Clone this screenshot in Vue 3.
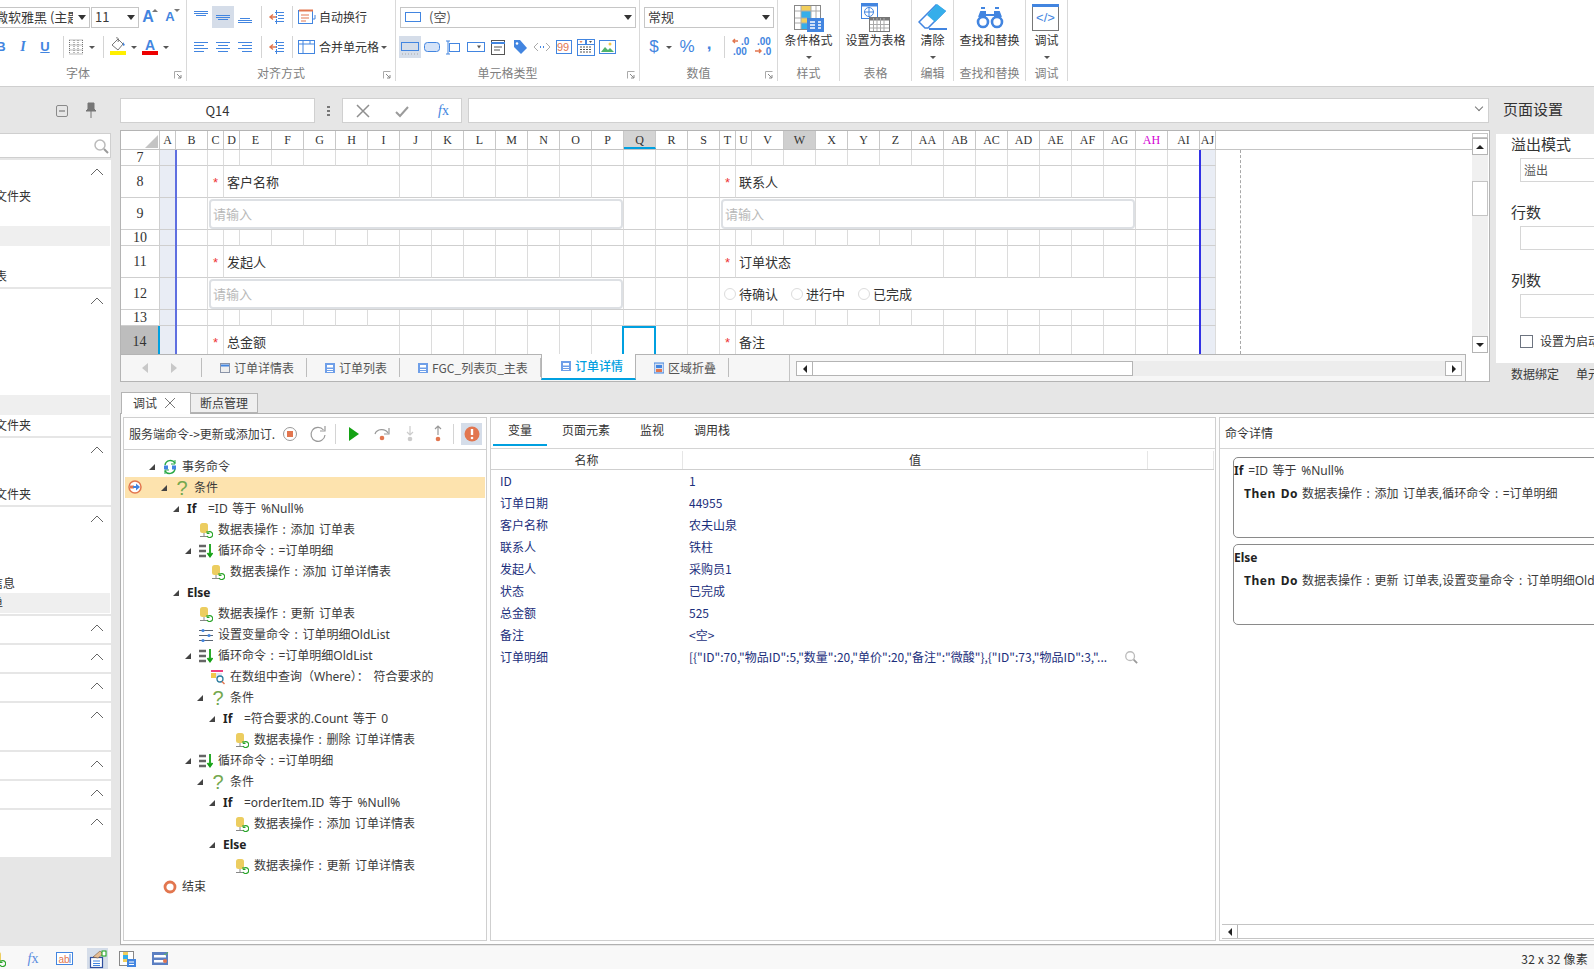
<template>
  <div class="app">
    <!-- 功能区 -->
    <div class="ribbon">
      <div class="group g-font">
        <div class="rb-row">
          <div class="combo c-family"><span class="combo-text">微软雅黑 (主题</span><i class="caret"></i></div>
          <div class="combo c-size"><span class="combo-text">11</span><i class="caret"></i></div>
          <span class="grow big">A<i class="tri-up"></i></span>
          <span class="grow small">A<i class="tri-down"></i></span>
        </div>
        <div class="rb-row">
          <span class="fmt"><b>B</b></span>
          <span class="fmt"><b><em>I</em></b></span>
          <span class="fmt under"><b>U</b></span>
          <i class="sep" style="margin-left:7px"></i>
          <svg class="i20" style="margin-left:2px" viewBox="0 0 20 20" v-html="ic.borders"></svg>
          <span class="drop w12"><i class="mini"></i></span>
          <i class="sep" style="margin-left:5px"></i>
          <svg class="i22" style="margin-left:3px" viewBox="0 0 22 22" v-html="ic.fill"></svg>
          <span class="drop"><i class="mini"></i></span>
          <svg class="i22" viewBox="0 0 22 22" v-html="ic.fontColor"></svg>
          <span class="drop"><i class="mini"></i></span>
        </div>
        <div class="g-label with-launch" style="margin-left:-10px">字体</div>
        <svg class="launcher" viewBox="0 0 8 8" v-html="ic.launcher"></svg>
      </div>

      <div class="group g-align">
        <div class="rb-row">
          <svg class="i22" viewBox="0 0 22 22" v-html="ic.alignTop"></svg>
          <svg class="i22 on" viewBox="0 0 22 22" v-html="ic.alignMid"></svg>
          <svg class="i22" viewBox="0 0 22 22" v-html="ic.alignBot"></svg>
          <i class="sep" style="margin-left:5px"></i>
          <svg class="i22" style="margin-left:4px" viewBox="0 0 22 22" v-html="ic.indent"></svg>
          <i class="sep" style="margin-left:4px"></i>
          <svg class="i20" style="margin-left:4px" viewBox="0 0 20 20" v-html="ic.wrap"></svg>
          <span class="rb-text">自动换行</span>
        </div>
        <div class="rb-row">
          <svg class="i22" viewBox="0 0 22 22" v-html="ic.left"></svg>
          <svg class="i22" viewBox="0 0 22 22" v-html="ic.center"></svg>
          <svg class="i22" viewBox="0 0 22 22" v-html="ic.right"></svg>
          <i class="sep" style="margin-left:5px"></i>
          <svg class="i22" style="margin-left:4px" viewBox="0 0 22 22" v-html="ic.indent"></svg>
          <i class="sep" style="margin-left:4px"></i>
          <svg class="i20" style="margin-left:4px" viewBox="0 0 20 20" v-html="ic.merge"></svg>
          <span class="rb-text">合并单元格</span>
          <span class="drop"><i class="mini"></i></span>
        </div>
        <div class="g-label with-launch">对齐方式</div>
        <svg class="launcher" viewBox="0 0 8 8" v-html="ic.launcher"></svg>
      </div>

      <div class="group g-type">
        <div class="rb-row">
          <div class="combo c-type">
            <svg class="i18" viewBox="0 0 18 18" v-html="ic.typeSmall"></svg>
            <span class="combo-text">(空)</span><i class="caret"></i>
          </div>
        </div>
        <div class="rb-row">
          <svg v-for="(t, i) in cellTypes" :key="t" class="i22" :class="{ on: i === 0 }" viewBox="0 0 22 22" v-html="ic[t]"></svg>
        </div>
        <div class="g-label with-launch">单元格类型</div>
        <svg class="launcher" viewBox="0 0 8 8" v-html="ic.launcher"></svg>
      </div>

      <div class="group g-num">
        <div class="rb-row">
          <div class="combo c-num"><span class="combo-text">常规</span><i class="caret"></i></div>
        </div>
        <div class="rb-row">
          <span class="num-sign w20">$</span>
          <span class="drop"><i class="mini"></i></span>
          <span class="num-sign w20" style="margin-left:3px">%</span>
          <span class="num-sign w20 comma" style="margin-left:2px">,</span>
          <i class="sep" style="margin-left:5px"></i>
          <svg class="i22" style="margin-left:5px" viewBox="0 0 22 22" v-html="ic.decUp"></svg>
          <svg class="i22" viewBox="0 0 22 22" v-html="ic.decDown"></svg>
        </div>
        <div class="g-label with-launch">数值</div>
        <svg class="launcher" viewBox="0 0 8 8" v-html="ic.launcher"></svg>
      </div>

      <div v-for="b in bigButtons" :key="b.group + b.text" class="group big-group" :style="{ width: b.w + 'px' }">
        <svg class="big-icon" viewBox="0 0 30 30" v-html="ic[b.icon]"></svg>
        <div class="big-text">{{ b.text }}</div>
        <div class="big-caret"><i v-if="b.caret" class="mini"></i></div>
        <div class="g-label">{{ b.group }}</div>
      </div>
    </div>

    <!-- 公式栏 -->
    <div class="formula-bar">
      <svg class="fb-minus" viewBox="0 0 12 12"><rect x=".5" y=".5" width="11" height="11" rx="1.5" fill="none" stroke="#8a8a8a" /><path d="M3 6h6" stroke="#666" /></svg>
      <svg class="fb-pin" viewBox="0 0 12 16"><path d="M3 1h6v6l2 2H1l2-2zM6 9v7" fill="#777" stroke="#777" /></svg>
      <div class="name-box">Q14</div>
      <span class="fb-dots"></span>
      <div class="fx-box">
        <svg class="i16" viewBox="0 0 16 16"><path d="M2 2l12 12M14 2L2 14" stroke="#8f8f8f" stroke-width="1.5" /></svg>
        <svg class="i16" viewBox="0 0 16 16"><path d="M2 9l4 4 8-9" fill="none" stroke="#9b9b9b" stroke-width="2" /></svg>
        <span class="fx-text"><i>f</i>x</span>
      </div>
      <div class="formula-input"><span class="fb-chev"></span></div>
      <div class="page-title">页面设置</div>
    </div>

    <div class="main">
      <!-- 左侧分组列表 -->
      <aside class="side">
        <div class="side-search">
          <svg class="i16" viewBox="0 0 16 16"><circle cx="7" cy="7" r="5" fill="none" stroke="#bbb" stroke-width="1.5" /><path d="M11 11l4 4" stroke="#999" stroke-width="2" /></svg>
        </div>
        <section v-for="(s, i) in sideSections" :key="i" class="side-sec">
          <svg class="chev" viewBox="0 0 14 8"><path d="M1 7l6-6 6 6" fill="none" stroke="#666" /></svg>
          <div v-for="(r, j) in s" :key="j" class="side-row" :class="{ gray: r.gray }">
            <span v-if="r.t" :style="{ marginLeft: r.x + 'px' }">{{ r.t }}</span>
          </div>
        </section>
      </aside>

      <div class="work">
        <div class="top-row">
          <!-- 表格设计区 -->
          <div class="sheet">
            <div class="sheet-main">
              <div class="col-head grid-cols">
                <div class="corner"><i></i></div>
                <div v-for="c in colNames" :key="c" class="col-cell" :class="{ 'col-active': c === 'Q', 'col-hover': c === 'W', 'col-pink': c === 'AH' }">{{ c }}</div>
              </div>
              <div class="sheet-body">
                <div v-for="row in rows" :key="row.no" class="sheet-row grid-cols" :style="{ height: row.h + 'px' }">
                  <div class="row-head" :class="{ 'row-active': row.no === 14 }">{{ row.no }}</div>
                  <div v-for="c in row.cells" :key="c.i" class="cell" :class="{ shade: c.i === 0 || c.i === 35 }" :style="{ gridColumn: 'span ' + c.span }">
                    <span v-if="c.kind === 'star'" class="star">*</span>
                    <span v-else-if="c.kind === 'label'" class="cell-label">{{ c.text }}</span>
                    <div v-else-if="c.kind === 'input'" class="cell-input">请输入</div>
                    <div v-else-if="c.kind === 'radio'" class="radios">
                      <label v-for="o in c.options" :key="o"><i></i>{{ o }}</label>
                    </div>
                  </div>
                </div>
                <i class="freeze freeze-l"></i>
                <i class="freeze freeze-r"></i>
                <i class="page-break"></i>
                <i class="selection"></i>
              </div>
              <div class="sheet-tabs">
                <div class="tab-nav">
                  <i class="nav-l"></i><i class="nav-r"></i>
                </div>
                <div v-for="t in sheetTabs" :key="t.name" class="sheet-tab" :class="{ active: t.active }">
                  <svg class="tab-icon" viewBox="0 0 10 12" v-html="ic[t.icon]"></svg>{{ t.name }}
                </div>
                <i class="hs-div"></i>
                <div class="hscroll">
                  <span class="sb-btn"><i class="tri-l"></i></span>
                  <span class="sb-thumb"></span>
                  <span class="sb-track"></span>
                  <span class="sb-btn"><i class="tri-r"></i></span>
                </div>
              </div>
            </div>
            <div class="vscroll">
              <span class="vs-split"></span>
              <span class="vs-btn"><i class="tri-u"></i></span>
              <div class="vs-track"><span class="vs-thumb"></span></div>
              <span class="vs-btn"><i class="tri-d"></i></span>
            </div>
          </div>

          <!-- 属性面板 -->
          <div class="props">
            <div class="props-card">
              <div class="prop-title">溢出模式</div>
              <div class="prop-input">溢出</div>
              <div class="prop-title next">行数</div>
              <div class="prop-input"></div>
              <div class="prop-title next">列数</div>
              <div class="prop-input"></div>
              <label class="prop-check"><i></i>设置为启动项</label>
            </div>
            <div class="prop-tabs"><span>数据绑定</span><span>单元格设置</span></div>
          </div>
        </div>

        <!-- 调试面板 -->
        <div class="debug">
          <div class="debug-tabs">
            <div class="dtab on">调试<svg class="i12" viewBox="0 0 12 12"><path d="M1 1l10 10M11 1L1 11" stroke="#777" /></svg></div>
            <div class="dtab">断点管理</div>
          </div>
          <div class="debug-wrap">
            <div class="panel p-tree">
              <div class="tree-bar">
                <span class="tree-title">服务端命令-&gt;更新或添加订.</span>
                <svg class="i20 t1" viewBox="0 0 20 20" v-html="ic.stop"></svg>
                <svg class="i20 t2" viewBox="0 0 20 20" v-html="ic.refresh"></svg>
                <i class="sep t3"></i>
                <svg class="i20 t4" viewBox="0 0 20 20" v-html="ic.play"></svg>
                <svg class="i20 t5" viewBox="0 0 20 20" v-html="ic.stepOver"></svg>
                <svg class="i20 t5" viewBox="0 0 20 20" v-html="ic.stepIn"></svg>
                <svg class="i20 t5" viewBox="0 0 20 20" v-html="ic.stepOut"></svg>
                <i class="sep t6"></i>
                <span class="err-btn"><svg class="i20" viewBox="0 0 20 20" v-html="ic.error"></svg></span>
              </div>
              <div class="tree">
                <div v-for="(n, i) in tree" :key="i" class="tree-row" :class="{ current: n.cur }" :style="{ paddingLeft: 21 + n.d * 12 + 'px' }">
                  <svg v-if="n.cur" class="bp-icon" viewBox="0 0 14 14" v-html="ic.breakpoint"></svg>
                  <span class="arrow"><i v-if="n.open"></i></span>
                  <svg v-if="n.icon" class="tree-icon" viewBox="0 0 14 16" v-html="ic[n.icon]"></svg>
                  <b v-if="n.key" class="tree-key">{{ n.key }}</b>
                  <span class="tree-text">{{ n.text }}</span>
                </div>
              </div>
            </div>

            <div class="panel p-vars">
              <div class="var-tabs">
                <span v-for="(t, i) in varTabs" :key="t" class="var-tab" :class="{ on: i === 0 }">{{ t }}</span>
              </div>
              <div class="var-table">
                <div class="var-head var-grid">
                  <div>名称</div><div>值</div><div></div>
                </div>
                <div v-for="v in variables" :key="v.name" class="var-row var-grid">
                  <div class="var-name">{{ v.name }}</div>
                  <div class="var-val">
                    <span>{{ v.value }}</span>
                    <svg v-if="v.more" class="i14" viewBox="0 0 16 16"><circle cx="7" cy="7" r="5" fill="none" stroke="#bbb" stroke-width="1.5" /><path d="M11 11l4 4" stroke="#999" stroke-width="2" /></svg>
                  </div>
                </div>
              </div>
            </div>

            <div class="panel p-detail">
              <div class="detail-head">命令详情</div>
              <div class="detail-body">
                <div class="detail-card">
                  <div><b>If</b><span class="cond">=ID 等于 %Null%</span></div>
                  <div class="then"><b>Then Do</b>数据表操作 : 添加 订单表,循环命令 : =订单明细</div>
                </div>
                <div class="detail-card">
                  <div><b>Else</b></div>
                  <div class="then"><b>Then Do</b>数据表操作 : 更新 订单表,设置变量命令 : 订单明细OldList</div>
                </div>
              </div>
              <div class="detail-scroll"><span class="sb-btn"><i class="tri-l"></i></span></div>
            </div>
          </div>
        </div>
      </div>
    </div>

    <!-- 状态栏 -->
    <div class="status">
      <svg class="st-icon st-db" viewBox="0 0 14 16" v-html="ic.db"></svg>
      <span class="st-fx"><i>f</i>x</span>
      <svg class="i20 st-ab" viewBox="0 0 20 20" v-html="ic.abField"></svg>
      <span class="st-active"><svg class="i20" viewBox="0 0 20 20" v-html="ic.hand"></svg></span>
      <svg class="i20 st-cf" viewBox="0 0 20 20" v-html="ic.cfSmall"></svg>
      <svg class="i20 st-form" viewBox="0 0 20 20" v-html="ic.formSmall"></svg>
      <span class="st-size">32 x 32 像素</span>
    </div>
  </div>
</template>

<script setup>
const blue = '#4285e0'
const orange = '#e2764f'

const ic = {
  launcher: `<path d="M.5 7.5v-7h7" fill="none" stroke="#aaa"/><path d="M3 3l4 4M4 7h3V4" fill="none" stroke="#888"/>`,
  borders: `<path d="M3.5 3h13M3.5 8h13M3.5 13h13M3.5 17h13M3.5 3v14M8 3v14M12 3v14M16.5 3v14" stroke="#777" stroke-dasharray="1 1"/>`,
  fill: `<path d="M5 9l6-6 5 5-5 6z" fill="#fff" stroke="#777"/><path d="M9 2c2-1 3 1 2 4" fill="none" stroke="#777"/><path d="M16 6l2 3-2 1z" fill="${blue}"/><rect x="3" y="15" width="16" height="4" fill="#ffef00"/>`,
  fontColor: `<text x="11" y="14" text-anchor="middle" font-size="14" font-weight="700" font-family="Liberation Sans" fill="${blue}">A</text><rect x="3" y="15" width="16" height="4" fill="#ee0000"/>`,
  alignTop: `<path d="M4 5.5h14M4 7.5h14M6 9.5h10" stroke="${blue}"/>`,
  alignMid: `<path d="M4 9.5h14M4 11.5h14M6 13.5h10" stroke="${blue}"/>`,
  alignBot: `<path d="M6 12.5h10M4 14.5h14M4 16.5h14" stroke="${blue}"/>`,
  left: `<path d="M4 6.5h14M4 9.5h10M4 12.5h14M4 15.5h10" stroke="${blue}"/>`,
  center: `<path d="M4 6.5h14M6 9.5h10M4 12.5h14M6 15.5h10" stroke="${blue}"/>`,
  right: `<path d="M4 6.5h14M8 9.5h10M4 12.5h14M8 15.5h10" stroke="${blue}"/>`,
  indent: `<path d="M9 6.5h9M12 9.5h6M12 12.5h6M9 15.5h9" stroke="${blue}"/><path d="M10.500 4v14" stroke="${blue}" stroke-dasharray="2 1"/><path d="M10 11H4M7 8.500L4 11l3 2.500" fill="none" stroke="${orange}" stroke-width="1.400"/>`,
  wrap: `<rect x="1.500" y="3.500" width="14" height="13" fill="none" stroke="${blue}"/><path d="M2 3.500h14" stroke="${orange}" stroke-width="2"/><path d="M4 8h8M4 11h8M4 14h5" stroke="${orange}"/><path d="M18 8v4h-3" fill="none" stroke="${blue}"/>`,
  merge: `<rect x="1.500" y="3.500" width="16" height="13" fill="none" stroke="${blue}"/><path d="M2 7h15M6 4v12M13 4v3" stroke="${blue}"/>`,
  typeSmall: `<rect x="1.500" y="4.500" width="15" height="9" fill="none" stroke="${blue}"/>`,
  tBox: `<rect x="2.500" y="6.500" width="17" height="8" fill="none" stroke="${blue}"/><path d="M3 18h16" stroke="#aaa" stroke-dasharray="1 2"/>`,
  tRound: `<rect x="3.500" y="6.500" width="15" height="9" rx="3" fill="#d5e3f8" stroke="${blue}"/>`,
  tIbeam: `<rect x="6.500" y="7.500" width="10" height="8" fill="none" stroke="${blue}"/><path d="M3 5h4M3 18h4M5 5v13" stroke="${blue}"/>`,
  tCombo: `<rect x="2.500" y="6.500" width="17" height="9" fill="none" stroke="${blue}"/><path d="M12 9.500h4l-2 3z" fill="#555"/>`,
  tList: `<rect x="4.500" y="4.500" width="13" height="14" fill="none" stroke="#555"/><path d="M4 7h14" stroke="${blue}" stroke-width="2"/><path d="M7 11h8M7 14h6" stroke="#555"/>`,
  tTag: `<path d="M5 4h6l7 8-6 6-7-7z" fill="${blue}"/><circle cx="8" cy="7.500" r="1.300" fill="#fff"/>`,
  tCode: `<path d="M7 7l-4 4 4 4M15 7l4 4-4 4" fill="none" stroke="#aaa"/><path d="M9 11h1M12 11h1" stroke="${blue}" stroke-width="2"/>`,
  t99: `<rect x="3.500" y="4.500" width="15" height="13" fill="#fff" stroke="${blue}"/><text x="10" y="15" text-anchor="middle" font-size="11" font-family="Liberation Sans" fill="${orange}">99</text>`,
  tCal: `<rect x="2.500" y="3.500" width="8" height="5" fill="#fff" stroke="${blue}"/><rect x="11.500" y="3.500" width="8" height="5" fill="#fff" stroke="${blue}"/><rect x="2.500" y="8.500" width="17" height="11" fill="#fff" stroke="${blue}"/><path d="M5 11h12M5 13.500h12M5 16h12" stroke="#555" stroke-dasharray="2 1"/><path d="M5 5l1 1.500 1-1.500" fill="none" stroke="${orange}"/><path d="M14 5h3l-1.500 2z" fill="#555"/>`,
  tImg: `<rect x="2.500" y="4.500" width="16" height="13" fill="#fff" stroke="${blue}"/><path d="M4 16l4-5 3 3 2-2 4 4z" fill="#4fb36b"/><circle cx="13" cy="8" r="1.500" fill="#f2c84b"/>`,
  decUp: `<path d="M8 5H3M5 3L3 5l2 2" fill="none" stroke="${orange}" stroke-width="1.400"/><text x="11" y="9" font-size="10" font-weight="700" font-family="Liberation Sans" fill="${blue}">.0</text><text x="3" y="19" font-size="10" font-weight="700" font-family="Liberation Sans" fill="${blue}">.00</text>`,
  decDown: `<text x="5" y="9" font-size="10" font-weight="700" font-family="Liberation Sans" fill="${blue}">.00</text><path d="M3 15h6M7 13l2 2-2 2" fill="none" stroke="${orange}" stroke-width="1.400"/><text x="11" y="19" font-size="10" font-weight="700" font-family="Liberation Sans" fill="${blue}">.0</text>`,
  bigCf: `<rect x=".5" y="3.500" width="26" height="24" fill="#fff" stroke="#888"/><rect x="7" y="4" width="10" height="5" fill="#f2cf5c"/><rect x="7" y="9" width="10" height="7" fill="#35aeea"/><rect x="7" y="16" width="10" height="5" fill="#f2cf5c"/><rect x="7" y="21" width="6" height="6" fill="#35aeea"/><path d="M7 4v23M17 4v12M22 4v12M1 9h25M1 16h12M1 21h12" stroke="#aaa"/><rect x="13" y="16" width="17" height="14" fill="${blue}"/><path d="M16 20h5M24 20h3M16 23h5M24 26h3M24 23h3M16 26h5" stroke="#fff" stroke-width="1.300"/>`,
  bigTable: `<rect x=".5" y="1.500" width="16" height="15" fill="#fff" stroke="${blue}"/><path d="M0 3h17" stroke="${blue}" stroke-width="3"/><circle cx="8" cy="10" r="4.500" fill="#fff" stroke="${blue}"/><path d="M3.500 10h9M8 5.500v9" stroke="${blue}"/><rect x="8.500" y="15.500" width="20" height="14" fill="#fff" stroke="#777"/><path d="M9 17h19" stroke="#777" stroke-width="3"/><path d="M9 22.500h19M9 26h19M12.500 16v13M16 16v13M19.500 16v13M23 16v13" stroke="#aaa"/>`,
  bigEraser: `<path d="M1 20L18 3l9 6-17 17H7z" fill="#fff" stroke="${blue}" stroke-width="1.500"/><path d="M9 13L19 2l9 7-11 11z" fill="#35aeea"/><path d="M11 27h18" stroke="${blue}" stroke-width="2"/>`,
  bigFind: `<circle cx="8" cy="20" r="5" fill="#fff" stroke="${blue}" stroke-width="2.600"/><circle cx="22" cy="20" r="5" fill="#fff" stroke="${blue}" stroke-width="2.600"/><path d="M4 15l2-5h4v5M26 15l-2-5h-4v5M10 13h10" fill="${blue}" stroke="${blue}" stroke-width="2"/><path d="M6 6h4M20 6h4" stroke="${blue}" stroke-width="2"/>`,
  bigDebug: `<rect x=".5" y="2.500" width="26" height="26" fill="#fff" stroke="#777"/><rect x="0" y="2" width="27" height="3" fill="${blue}"/><text x="13.500" y="20" text-anchor="middle" font-size="13" font-family="Liberation Sans" fill="${blue}">&lt;/&gt;</text>`,
  sheetPlain: `<rect x=".5" y="1.500" width="9" height="9" fill="#eee" stroke="#8a94a8"/><path d="M1 3.500h8" stroke="${blue}" stroke-width="2"/>`,
  sheetForm: `<rect x="0" y="1" width="10" height="10" fill="#6f9fe8"/><rect x="2" y="3" width="6" height="2.500" fill="#fff"/><path d="M2 7.500h6M2 9.500h6" stroke="#fff"/>`,
  sheetFold: `<rect x="0" y="1" width="10" height="10" fill="#d5dff0" stroke="${blue}"/><rect x="2" y="3" width="6" height="3" fill="${blue}"/><rect x="2" y="7" width="6" height="3" fill="${orange}"/>`,
  stop: `<circle cx="10" cy="10" r="6.500" fill="none" stroke="#999"/><rect x="7" y="7" width="6" height="6" fill="${orange}"/>`,
  refresh: `<path d="M15.500 6A7 7 0 1 0 17 11" fill="none" stroke="#999" stroke-width="1.200"/><path d="M17 2v5h-5" fill="none" stroke="#999" stroke-width="1.200"/>`,
  play: `<path d="M5 3l10 7-10 7z" fill="#14a214"/>`,
  stepOver: `<path d="M3 10a7 6 0 0 1 13-1" fill="none" stroke="#999" stroke-width="1.200"/><path d="M17 4v6h-5" fill="none" stroke="#999" stroke-width="1.200"/><circle cx="10" cy="14" r="2.300" fill="${orange}"/>`,
  stepIn: `<path d="M10 2v9M7 8l3 3 3-3" fill="none" stroke="#ccc" stroke-width="1.200"/><circle cx="10" cy="15" r="2.300" fill="#ccc"/>`,
  stepOut: `<path d="M10 11V2M7 5l3-3 3 3" fill="none" stroke="#999" stroke-width="1.200"/><circle cx="10" cy="15" r="2.300" fill="${orange}"/>`,
  error: `<circle cx="10" cy="10" r="7.500" fill="${orange}"/><path d="M10 5v6" stroke="#fff" stroke-width="2.400"/><circle cx="10" cy="14" r="1.300" fill="#fff"/>`,
  breakpoint: `<circle cx="7" cy="7" r="6" fill="#fff" stroke="${orange}" stroke-width="1.500"/><path d="M2 7h4" stroke="${orange}" stroke-width="3"/><path d="M5 7h4" stroke="${blue}" stroke-width="2"/><path d="M8 3.500L12 7l-4 3.500z" fill="${blue}"/>`,
  tx: `<path d="M2 6a5.500 5.500 0 0 1 10-2M12 10a5.500 5.500 0 0 1-10 2" fill="none" stroke="#27a844" stroke-width="1.400"/><path d="M12 1v4H8M2 15v-4h4" fill="none" stroke="#27a844"/><rect x="1" y="6.500" width="4" height="4" fill="${blue}"/><rect x="9" y="6.500" width="4" height="4" fill="${blue}"/>`,
  cond: `<text x="7" y="15" text-anchor="middle" font-size="20" font-family="Liberation Sans" fill="#74a84f">?</text>`,
  db: `<rect x="1" y="1" width="8" height="10" rx="2.500" fill="#eccd60"/><path d="M5 11v3M1 14.500h8" stroke="#888"/><path d="M8 14a3 3 0 1 0 .5-3.500" fill="none" stroke="#2aa52a" stroke-width="1.200"/><path d="M8 9v2.500h2.500" fill="none" stroke="#2aa52a"/>`,
  loop: `<path d="M0 3h7M0 8h7M0 13h7" stroke="#666" stroke-width="2.600"/><path d="M11 1v12M8.500 10l2.500 3.500 2.500-3.500" fill="none" stroke="#14a214" stroke-width="1.800"/>`,
  vars: `<path d="M0 3.500h14M0 8.500h14M0 13.500h14" stroke="#5a6472"/><circle cx="4" cy="3.500" r="1.600" fill="${blue}"/><circle cx="10" cy="8.500" r="1.600" fill="${blue}"/><circle cx="4" cy="13.500" r="1.600" fill="${blue}"/>`,
  query: `<rect x="0" y="1" width="12" height="2" fill="#ef3f7e"/><rect x="0" y="4" width="5" height="5" fill="#f2c84b"/><rect x="5" y="4" width="6" height="6" fill="#dfe8f5"/><circle cx="9" cy="10" r="3" fill="#fff" stroke="#2b7c9e" stroke-width="1.300"/><path d="M11 12.500l2.500 2.500" stroke="${orange}" stroke-width="1.400"/>`,
  end: `<circle cx="7" cy="8" r="5" fill="none" stroke="${orange}" stroke-width="2.800"/>`,
  abField: `<rect x="1.500" y="3.500" width="16" height="12" fill="#fff" stroke="${blue}"/><text x="3.500" y="13.500" font-size="10" font-family="Liberation Sans" fill="${orange}">ab</text><path d="M15 5v9" stroke="${blue}"/>`,
  hand: `<rect x="2.500" y="8.500" width="12" height="10" fill="#fff" stroke="#2f4f9f" stroke-width="1.200"/><path d="M5 12h7M5 14.500h7M5 16.500h7" stroke="${blue}"/><path d="M5 8l7-6 3 3-5 4z" fill="#e6bd93" stroke="#7a5a3a" stroke-width=".6"/><rect x="14" y="2" width="4" height="5" fill="#fff" stroke="#14a214"/>`,
  cfSmall: `<rect x="1.500" y="2.500" width="14" height="14" fill="#fff" stroke="#888"/><rect x="5" y="3" width="5" height="3" fill="#f2cf5c"/><rect x="5" y="6" width="5" height="4" fill="#35aeea"/><rect x="5" y="10" width="5" height="3" fill="#f2cf5c"/><rect x="9" y="10" width="9" height="8" fill="${blue}"/><path d="M11 13h5M11 15.500h5" stroke="#fff"/>`,
  formSmall: `<rect x="1" y="3" width="16" height="13" fill="#5b7fc2"/><rect x="3" y="6" width="12" height="2.500" fill="#fff"/><rect x="3" y="11" width="12" height="2.500" fill="#fff"/><circle cx="14" cy="12" r="2" fill="${orange}"/><path d="M13 5l1.500 1L17 3" fill="none" stroke="#5cb85c"/>`,
}

const cellTypes = ['tBox', 'tRound', 'tIbeam', 'tCombo', 'tList', 'tTag', 'tCode', 't99', 'tCal', 'tImg']

const bigButtons = [
  { group: '样式', text: '条件格式', w: 62, icon: 'bigCf', caret: true },
  { group: '表格', text: '设置为表格', w: 72, icon: 'bigTable' },
  { group: '编辑', text: '清除', w: 42, icon: 'bigEraser', caret: true },
  { group: '查找和替换', text: '查找和替换', w: 72, icon: 'bigFind' },
  { group: '调试', text: '调试', w: 42, icon: 'bigDebug', caret: true },
]

// 左侧分组：每项一行 20px，x 是被面板左边裁掉的偏移
const blank = () => ({})
const side = (n, items = {}) => Array.from({ length: n }, (_, i) => items[i] || blank())
const sideSections = [
  side(6, { 1: { t: '文件夹', x: -5 }, 3: { gray: true }, 5: { t: '表', x: -5 } }),
  side(7, { 5: { gray: true }, 6: { t: '文件夹', x: -5 } }),
  side(3, { 2: { t: '文件夹', x: -5 } }),
  side(5, { 3: { t: '信息', x: -9 }, 4: { gray: true, t: '单', x: -9 } }),
  side(1),
  side(1),
  side(1),
  side(2),
  side(1),
  side(1),
  side(2),
]

const colNames = ['A', 'B', 'C', 'D', 'E', 'F', 'G', 'H', 'I', 'J', 'K', 'L', 'M', 'N', 'O', 'P', 'Q', 'R', 'S', 'T', 'U', 'V', 'W', 'X', 'Y', 'Z', 'AA', 'AB', 'AC', 'AD', 'AE', 'AF', 'AG', 'AH', 'AI', 'AJ']

function buildRow(no, h, merges = {}) {
  const cells = []
  for (let i = 0; i < colNames.length; i++) {
    const m = merges[i]
    cells.push({ i, span: 1, ...m })
    if (m && m.span) i += m.span - 1
  }
  return { no, h, cells }
}

const labelRow = (no, a, b) =>
  buildRow(no, 32, {
    2: { kind: 'star' },
    3: { kind: 'label', text: a, span: 6 },
    19: { kind: 'star' },
    20: { kind: 'label', text: b, span: 7 },
  })

const rows = [
  buildRow(7, 16),
  labelRow(8, '客户名称', '联系人'),
  buildRow(9, 32, { 2: { kind: 'input', span: 14 }, 19: { kind: 'input', span: 14 } }),
  buildRow(10, 16),
  labelRow(11, '发起人', '订单状态'),
  buildRow(12, 32, {
    2: { kind: 'input', span: 14 },
    19: { kind: 'radio', span: 14, options: ['待确认', '进行中', '已完成'] },
  }),
  buildRow(13, 16),
  labelRow(14, '总金额', '备注'),
]

const sheetTabs = [
  { name: '订单详情表', icon: 'sheetPlain' },
  { name: '订单列表', icon: 'sheetForm' },
  { name: 'FGC_列表页_主表', icon: 'sheetForm' },
  { name: '订单详情', icon: 'sheetForm', active: true },
  { name: '区域折叠', icon: 'sheetFold' },
]

const tree = [
  { d: 0, open: true, icon: 'tx', text: '事务命令' },
  { d: 1, open: true, icon: 'cond', text: '条件', cur: true },
  { d: 2, open: true, key: 'If', text: '=ID 等于 %Null%' },
  { d: 3, icon: 'db', text: '数据表操作 : 添加 订单表' },
  { d: 3, open: true, icon: 'loop', text: '循环命令 : =订单明细' },
  { d: 4, icon: 'db', text: '数据表操作 : 添加 订单详情表' },
  { d: 2, open: true, key: 'Else' },
  { d: 3, icon: 'db', text: '数据表操作 : 更新 订单表' },
  { d: 3, icon: 'vars', text: '设置变量命令 : 订单明细OldList' },
  { d: 3, open: true, icon: 'loop', text: '循环命令 : =订单明细OldList' },
  { d: 4, icon: 'query', text: '在数组中查询（Where）： 符合要求的' },
  { d: 4, open: true, icon: 'cond', text: '条件' },
  { d: 5, open: true, key: 'If', text: '=符合要求的.Count 等于 0' },
  { d: 6, icon: 'db', text: '数据表操作 : 删除 订单详情表' },
  { d: 3, open: true, icon: 'loop', text: '循环命令 : =订单明细' },
  { d: 4, open: true, icon: 'cond', text: '条件' },
  { d: 5, open: true, key: 'If', text: '=orderItem.ID 等于 %Null%' },
  { d: 6, icon: 'db', text: '数据表操作 : 添加 订单详情表' },
  { d: 5, open: true, key: 'Else' },
  { d: 6, icon: 'db', text: '数据表操作 : 更新 订单详情表' },
  { d: 0, icon: 'end', text: '结束' },
]

const varTabs = ['变量', '页面元素', '监视', '调用栈']

const variables = [
  { name: 'ID', value: '1' },
  { name: '订单日期', value: '44955' },
  { name: '客户名称', value: '农夫山泉' },
  { name: '联系人', value: '铁柱' },
  { name: '发起人', value: '采购员1' },
  { name: '状态', value: '已完成' },
  { name: '总金额', value: '525' },
  { name: '备注', value: '<空>' },
  { name: '订单明细', value: '[{"ID":70,"物品ID":5,"数量":20,"单价":20,"备注":"微酸"},{"ID":73,"物品ID":3,"...', more: true },
]
</script>

<style>
html, body { margin: 0; background: #e6e6e6; }
</style>

<style scoped>
* { box-sizing: border-box; }
i, em { font-style: normal; }
.app {
  width: 1594px; height: 969px; overflow: hidden; background: #e6e6e6;
  display: flex; flex-direction: column;
  font: 12px/18px "Noto Sans CJK SC", "Noto Sans", sans-serif; color: #3a3a3a;
}
svg { display: block; flex: none; }
.i12 { width: 12px; height: 12px; }
.i14 { width: 14px; height: 14px; }
.i16 { width: 16px; height: 16px; }
.i18 { width: 18px; height: 18px; }
.i20 { width: 20px; height: 20px; }
.i22 { width: 22px; height: 22px; }
.on { background: #d5dde9; }

/* 功能区 */
.ribbon { height: 87px; flex: none; background: #fff; border-bottom: 1px solid #cfcfcf; display: flex; }
.group {
  position: relative; flex: none; height: 81px; padding-top: 6px;
  border-right: 1px solid #d9d9d9; display: flex; flex-direction: column; gap: 8px;
}
.g-font { width: 187px; }
.g-font .rb-row { margin-left: -10px; }
.g-align { width: 209px; padding-left: 3px; }
.g-type { width: 244px; }
.g-num { width: 138px; }
.rb-row { display: flex; align-items: center; height: 22px; flex: none; }
.g-type .rb-row:first-child, .g-num .rb-row:first-child { margin-left: 4px; }
.g-type .rb-row:nth-child(2) { margin-left: 3px; }
.g-num .rb-row:nth-child(2) { margin-left: 4px; }
.rb-text { margin-left: 2px; color: #333; white-space: nowrap; }
.g-label {
  position: absolute; left: 0; right: 0; bottom: 0; height: 16px;
  line-height: 16px; text-align: center; color: #808080; white-space: nowrap;
}
.with-launch { padding-right: 20px; }
.launcher { position: absolute; right: 4px; bottom: 2px; width: 8px; height: 8px; }
.sep { width: 1px; height: 22px; background: #d4d4d4; flex: none; display: block; }
.combo {
  height: 21px; background: #fff; border: 1px solid #c6c6c6; display: flex; align-items: center;
  padding: 0 3px; font-size: 13px; position: relative; overflow: hidden; flex: none;
}
.c-family { width: 100px; }
.c-family .combo-text { width: 78px; overflow: hidden; white-space: nowrap; flex: none; margin-left: 1px; }
.c-size { width: 48px; margin-left: 1px; }
.c-size .combo-text { flex: 1; }
.c-type { width: 236px; padding-left: 3px; }
.c-type .combo-text { flex: 1; margin-left: 7px; color: #555; }
.c-num { width: 130px; }
.c-num .combo-text { flex: 1; }
.caret { width: 0; height: 0; border: 4px solid transparent; border-top: 5px solid #333; border-bottom: 0; margin-left: auto; flex: none; }
.mini { display: block; width: 0; height: 0; border: 3px solid transparent; border-top: 3px solid #555; border-bottom: 0; }
.drop { width: 10px; display: flex; justify-content: center; flex: none; }
.w12 { width: 12px; }
.grow { position: relative; width: 22px; text-align: center; color: #4285e0; font-family: "Liberation Sans", sans-serif; font-weight: 700; flex: none; }
.grow.big { font-size: 16px; margin-left: -2px; }
.grow.small { font-size: 13px; }
.tri-up, .tri-down { position: absolute; right: 1px; top: 1px; width: 0; height: 0; border: 3px solid transparent; }
.tri-up { border-bottom: 3px solid #777; border-top: 0; }
.tri-down { border-top: 3px solid #777; border-bottom: 0; }
.fmt { width: 22px; text-align: center; color: #4285e0; font: 700 13px/18px "Liberation Sans", sans-serif; flex: none; }
.fmt em { font-family: "Liberation Serif", serif; font-style: italic; font-size: 14px; }
.under { text-decoration: underline; }
.num-sign { text-align: center; color: #4285e0; font: 400 17px/20px "Liberation Sans", sans-serif; flex: none; }
.comma { font-weight: 700; margin-top: -6px; }
.w20 { width: 20px; }
.big-group { align-items: center; padding-top: 2px; gap: 0; }
.big-icon { width: 30px; height: 30px; flex: none; }
.big-text { line-height: 18px; margin-top: -1px; white-space: nowrap; color: #333; }
.big-caret { height: 16px; padding-top: 7px; }

/* 公式栏 */
.formula-bar { height: 43px; flex: none; display: flex; align-items: flex-start; padding-top: 11px; }
.fb-minus { width: 12px; height: 12px; margin: 7px 0 0 56px; }
.fb-pin { width: 12px; height: 16px; margin: 4px 0 0 17px; }
.name-box {
  width: 195px; height: 25px; margin-left: 23px; background: #fff; border: 1px solid #d0d0d0;
  font-size: 13px; line-height: 23px; text-align: center; color: #333;
}
.fb-dots { width: 3px; height: 11px; margin: 7px 0 0 12px; background: radial-gradient(circle, #777 1.2px, transparent 1.4px) 0 0 / 3px 4px; }
.fx-box {
  width: 120px; height: 25px; margin-left: 12px; background: #fff; border: 1px solid #d0d0d0;
  display: flex; align-items: center; padding-left: 12px;
}
.fx-box .i16 + .i16 { margin-left: 23px; }
.fx-text { margin-left: 28px; color: #4285e0; font: 14px "Liberation Serif", serif; }
.fx-text i, .st-fx i { font-style: italic; }
.formula-input { width: 1021px; height: 25px; margin-left: 6px; background: #fff; border: 1px solid #d0d0d0; position: relative; }
.fb-chev { position: absolute; right: 6px; top: 5px; width: 6px; height: 6px; border: solid #777; border-width: 0 1px 1px 0; transform: rotate(45deg); }
.page-title { margin-left: 14px; font-size: 15px; line-height: 22px; color: #333; white-space: nowrap; }

.main { flex: 1; min-height: 0; display: flex; }

/* 左侧 */
.side { width: 120px; flex: none; padding: 3px 9px 0 0; }
.side-search { height: 25px; margin-bottom: 2px; background: #fff; border: 1px solid #cfcfcf; border-left: 0; display: flex; align-items: center; justify-content: flex-end; padding-right: 1px; }
.side-sec { position: relative; background: #fff; padding: 6px 1px 1px 0; margin-bottom: 2px; overflow: hidden; }
.side-row { height: 20px; line-height: 20px; white-space: nowrap; color: #333; }
.side-row.gray { background: #efefef; }
.side-row span { display: block; }
.chev { position: absolute; right: 7px; top: 8px; width: 14px; height: 8px; }

.work { width: 1474px; flex: none; display: flex; flex-direction: column; }
.top-row { height: 262px; flex: none; display: flex; }

/* 表格 */
.sheet { width: 1370px; height: 252px; flex: none; background: #fff; border: 1px solid #b4b4b4; display: flex; }
.sheet-main { width: 1351px; flex: none; display: flex; flex-direction: column; }
.grid-cols {
  display: grid;
  grid-template-columns: 39px 16px 32px 16px 16px repeat(15, 32px) 16px 16px repeat(14, 32px) 16px;
}
.col-head { height: 19px; flex: none; border-bottom: 1px solid #c4c4c4; }
.corner { position: relative; border-right: 1px solid #c8c8c8; }
.corner i { position: absolute; right: 1px; bottom: 1px; border: solid transparent; border-width: 0 0 13px 13px; border-bottom-color: #c4c4c4; }
.col-cell {
  border-right: 1px solid #c8c8c8; text-align: center; overflow: hidden; white-space: nowrap;
  font: 12px/18px "Liberation Serif", serif; color: #333;
}
.col-active { background: #d4d4d4; border-bottom: 2px solid #00a0e0; }
.col-hover { background: #cfcfcf; }
.col-pink { color: #d400d4; }
.sheet-body { height: 204px; flex: none; position: relative; overflow: hidden; }
.sheet-row { overflow: hidden; grid-template-rows: 100%; }
.row-head {
  text-align: center; font: 14px/14px "Liberation Serif", serif; color: #333; padding-top: 1px;
  border-bottom: 1px solid #cfcfcf; border-right: 1px solid #cfcfcf;
  display: flex; align-items: center; justify-content: center; min-height: 0;
}
.row-active { background: #bdbdbd; border-right: 2px solid #00a0e0; }
.cell { border-right: 1px solid #dcdcdc; border-bottom: 1px solid #cfcfcf; min-width: 0; min-height: 0; display: flex; align-items: center; }
.shade { background: #e9edf5; }
.star { width: 100%; text-align: center; color: #ee3333; font: 13px/13px "Liberation Sans", sans-serif; margin-top: 2px; }
.cell-label { font-size: 13px; padding-left: 3px; color: #333; white-space: nowrap; }
.cell-input {
  width: 100%; height: 30px; border: 2px solid #dde0e4; border-radius: 4px; margin-left: 1px;
  padding-left: 2px; font-size: 13px; line-height: 26px; color: #b9b9b9;
}
.radios { display: flex; padding-left: 4px; font-size: 13px; color: #333; }
.radios label { display: flex; align-items: center; margin-right: 13px; white-space: nowrap; }
.radios i { width: 12px; height: 12px; border: 1px solid #dcdcdc; border-radius: 50%; margin-right: 3px; background: #fff; }
.freeze { position: absolute; top: 0; bottom: 0; width: 2px; }
.freeze-l { left: 54px; background: #5f6fe0; }
.freeze-r { left: 1078px; background: #3232e6; }
.page-break { position: absolute; top: 0; bottom: 0; left: 1119px; border-left: 1px dashed #a8a8a8; }
.selection { position: absolute; left: 501px; top: 176px; width: 34px; height: 34px; border: 2px solid #00a0e0; }

.sheet-tabs { width: 1345px; flex: none; display: flex; background: #f6f6f6; border-top: 1px solid #b4b4b4; border-right: 1px solid #b4b4b4; border-bottom: 1px solid #b4b4b4; height: 28px; }
.tab-nav { width: 81px; flex: none; position: relative; }
.tab-nav::after { content: ""; position: absolute; right: 0; top: 3px; bottom: 4px; width: 1px; background: #bdbdbd; }
.nav-l, .nav-r { position: absolute; top: 8px; width: 0; height: 0; border: 5px solid transparent; }
.nav-l { left: 21px; border-left: 0; border-right: 6px solid #c8c8c8; }
.nav-r { left: 50px; border-right: 0; border-left: 6px solid #c8c8c8; }
.sheet-tab { position: relative; display: flex; align-items: center; height: 26px; padding: 0 13px 0 18px; font-size: 12px; color: #555; white-space: nowrap; flex: none; }
.sheet-tab::after { content: ""; position: absolute; right: 0; top: 3px; bottom: 4px; width: 1px; background: #bdbdbd; }
.tab-icon { width: 10px; height: 12px; margin-right: 4px; }
.sheet-tab.active { background: #fff; color: #00a0e0; border: 1px solid #b4b4b4; border-top: 0; border-bottom: 2px solid #00a0e0; height: 26px; margin-top: -1px; padding-left: 19px; padding-right: 12px; font-weight: 500; }
.sheet-tab.active::after { display: none; }
.hs-div { width: 1px; background: #c4c4c4; margin-left: auto; margin-right: 6px; flex: none; }
.hscroll { width: 666px; height: 15px; margin-top: 6px; margin-right: 3px; display: flex; background: #ededed; flex: none; }
.sb-btn { width: 17px; flex: none; height: 100%; background: #fff; border: 1px solid #b4b4b4; display: flex; align-items: center; justify-content: center; }
.sb-thumb { width: 320px; flex: none; background: #fff; border: 1px solid #b4b4b4; border-left: 0; }
.sb-track { flex: 1; }
.tri-l, .tri-r, .tri-u, .tri-d { width: 0; height: 0; border: 4px solid transparent; }
.tri-l { border-left: 0; border-right: 4px solid #222; }
.tri-r { border-right: 0; border-left: 4px solid #222; }
.tri-u { border-top: 0; border-bottom: 4px solid #222; }
.tri-d { border-bottom: 0; border-top: 4px solid #222; }

.vscroll { width: 16px; flex: none; display: flex; flex-direction: column; height: 223px; }
.vs-split { height: 5px; margin-top: 2px; border: 1px solid #c4c4c4; flex: none; }
.vs-btn { height: 17px; flex: none; background: #fff; border: 1px solid #b4b4b4; display: flex; align-items: center; justify-content: center; }
.vs-track { height: 181px; flex: none; background: #f0f0f0; padding-top: 26px; }
.vs-thumb { display: block; height: 35px; background: #fff; border: 1px solid #c4c4c4; }

/* 属性面板 */
.props { width: 98px; margin-left: 6px; flex: none; overflow: hidden; }
.props-card { height: 229px; margin-top: 4px; background: #fff; padding-left: 15px; width: 120px; }
.prop-title { font-size: 15px; line-height: 20px; color: #333; white-space: nowrap; }
.prop-title.next { margin-top: 20px; }
.prop-input { margin: 4px 0 0 9px; width: 110px; height: 24px; border: 1px solid #d6d6d6; padding-left: 3px; line-height: 22px; color: #555; }
.prop-check { display: flex; align-items: center; margin: 14px 0 0 9px; white-space: nowrap; color: #333; }
.prop-check i { width: 13px; height: 13px; border: 1px solid #6d7480; margin-right: 7px; flex: none; }
.prop-tabs { display: flex; margin: 1px 0 0 15px; white-space: nowrap; gap: 17px; line-height: 20px; }

/* 调试面板 */
.debug { height: 554px; flex: none; }
.debug-tabs { display: flex; height: 21px; align-items: flex-end; position: relative; z-index: 1; margin-left: 1px; }
.dtab { height: 20px; padding: 0 8px; background: #efefef; border: 1px solid #b4b4b4; line-height: 18px; font-size: 12px; }
.dtab.on { width: 70px; height: 22px; margin-bottom: -1px; background: #fff; border-bottom: 0; padding: 0 0 2px 11px; display: flex; align-items: center; gap: 7px; }
.debug-tabs .dtab:last-child { width: 67px; margin-bottom: 0; border-left: 0; text-align: center; padding: 0; }
.debug-wrap { width: 1490px; height: 532px; background: #fdfdfd; border: 1px solid #b0b0b0; padding: 3px 2px; display: flex; gap: 3px; }
.panel { border: 1px solid #cfcfcf; background: #fff; flex: none; display: flex; flex-direction: column; min-height: 0; }
.p-tree { width: 364px; }
.p-vars { width: 726px; }
.p-detail { width: 380px; overflow: hidden; }

.tree-bar { height: 32px; flex: none; display: flex; align-items: center; border-bottom: 1px solid #cfcfcf; padding-left: 5px; }
.tree-title { width: 148px; white-space: nowrap; overflow: hidden; }
.t1 { margin-left: 3px; }
.t2 { margin-left: 8px; }
.t3 { margin-left: 7px; height: 20px; }
.t4 { margin-left: 8px; }
.t5 { margin-left: 8px; }
.t6 { margin-left: 5px; height: 20px; }
.err-btn { margin-left: 7px; width: 21px; height: 22px; background: #d5dde9; display: flex; align-items: center; justify-content: center; }
.tree { padding: 6px 0 0 1px; }
.tree-row {
  position: relative; height: 21px; line-height: 21px; display: flex; align-items: center; white-space: nowrap; color: #3a3a3a;
  font-family: "Noto Sans", "Noto Sans CJK SC", sans-serif; word-spacing: 1.5px;
}
.tree-row.current { background: #fde3ae; margin-right: 1px; }
.bp-icon { position: absolute; left: 3px; top: 3px; width: 14px; height: 14px; }
.arrow { width: 12px; flex: none; display: flex; justify-content: center; margin-right: 5px; }
.arrow i { display: block; border: solid transparent; border-width: 0 0 6px 6px; border-bottom-color: #444; }
.tree-icon { width: 14px; height: 16px; margin-right: 5px; }
.tree-key { width: 21px; font-weight: 700; color: #222; flex: none; }

.var-tabs { height: 31px; flex: none; display: flex; padding-left: 2px; border-bottom: 1px solid #d4d4d4; }
.var-tab { height: 28px; padding: 0 15px; line-height: 24px; color: #333; border-bottom: 2px solid transparent; }
.var-tab.on { border-bottom-color: #00a0e0; background: none; }
.var-table { margin-top: 2px; width: 723px; }
.var-grid { display: grid; grid-template-columns: 192px 465px 1fr; }
.var-head { height: 19px; line-height: 18px; text-align: center; color: #333; border-bottom: 1px solid #cfcfcf; }
.var-head > div { border-right: 1px solid #e6e6e6; }
.var-row { height: 22px; line-height: 22px; color: #1c2f7c; }
.var-name { padding-left: 9px; }
.var-val { padding: 0 10px 0 6px; display: flex; justify-content: space-between; align-items: center; white-space: nowrap; overflow: hidden; }

.detail-head { height: 31px; flex: none; line-height: 30px; padding-left: 5px; border-bottom: 1px solid #d4d4d4; color: #333; }
.detail-body { flex: 1; min-height: 0; padding: 8px 0 0 13px; }
.detail-card {
  width: 500px; height: 81px; border: 1px solid #8a8a8a; border-radius: 5px; margin-bottom: 6px; padding-top: 4px;
  white-space: nowrap; line-height: 18px; color: #3a3a3a; font-family: "Noto Sans", "Noto Sans CJK SC", sans-serif; word-spacing: 1.5px;
}
.detail-card b { color: #222; }
.cond { margin-left: 5px; }
.then { margin: 5px 0 0 10px; }
.then b { display: inline-block; width: 58px; letter-spacing: .5px; }
.detail-scroll { height: 15px; flex: none; border-top: 1px solid #c4c4c4; border-bottom: 1px solid #c4c4c4; margin: 0 0 1px 2px; display: flex; }
.detail-scroll .sb-btn { width: 16px; border-width: 0 1px 0 0; }

/* 状态栏 */
.status { height: 23px; flex: none; background: #f8f8f8; display: flex; align-items: center; padding-top: 2px; }
.st-icon { width: 14px; height: 16px; margin-left: -8px; }
.st-fx { margin-left: 19px; width: 16px; text-align: center; color: #5a8ce0; font: 14px "Liberation Serif", serif; }
.st-ab { margin-left: 14px; }
.st-active { width: 21px; height: 21px; margin-left: 12px; background: #d5dde9; display: flex; align-items: center; justify-content: center; }
.st-cf { margin-left: 10px; }
.st-form { margin-left: 13px; }
.st-size { margin-left: auto; margin-right: 6px; font-size: 12px; color: #333; letter-spacing: .2px; }
</style>
